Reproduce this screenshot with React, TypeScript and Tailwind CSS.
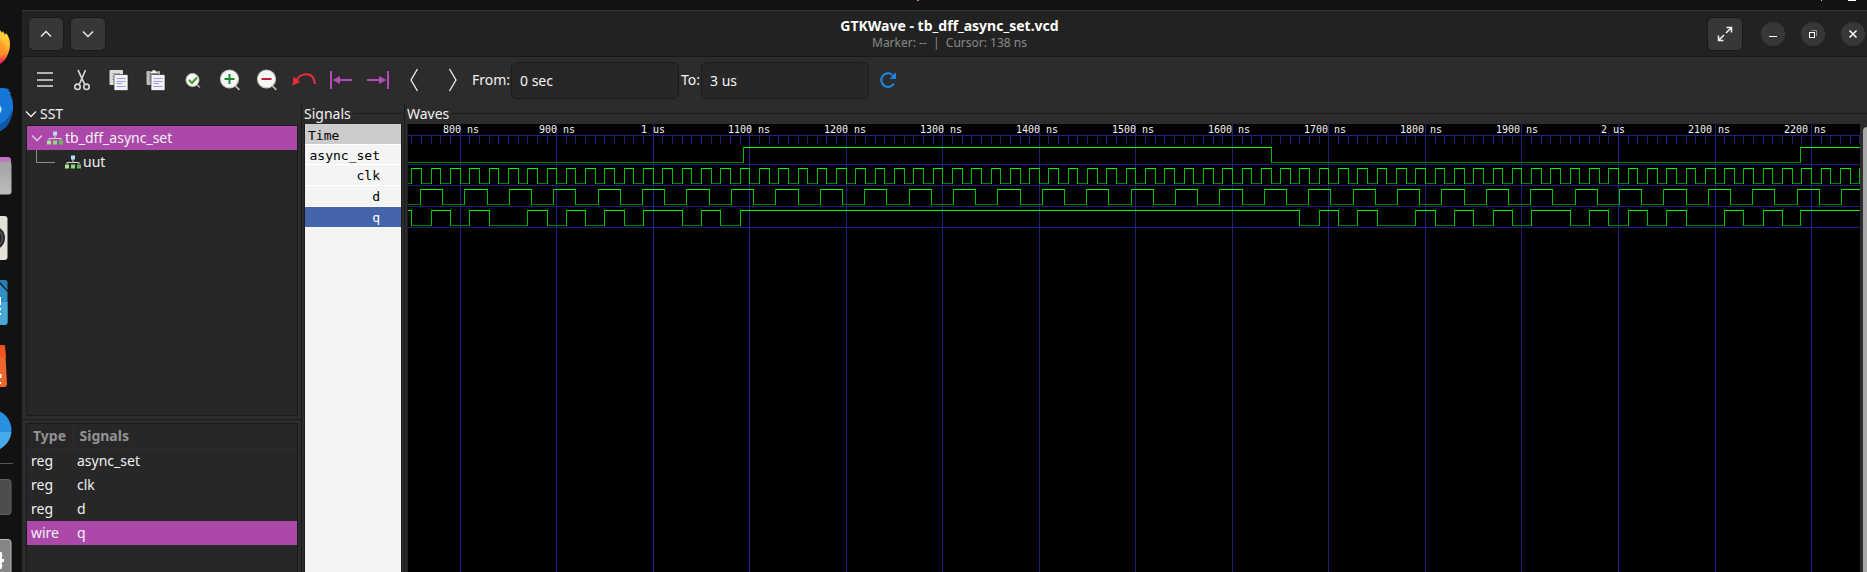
import type { ReactNode } from "react";

/* ---------- Wave data ---------- */

const X0 = 52.15;
const T0 = 800;
const PX_PER_NS = 0.9653;
const START = 740;
const END = 2400;

const toX = (t: number) => Math.floor(X0 + (t - T0) * PX_PER_NS) + 0.5;

type Signal = { name: string; top: number; initial: 0 | 1; edges: number[] };

const range = (from: number, to: number, step: number) => {
  const out: number[] = [];
  for (let t = from; t <= to; t += step) out.push(t);
  return out;
};

const signals: Signal[] = [
  { name: "async_set", top: 23, initial: 0, edges: [1094, 1640, 2189] },
  { name: "clk", top: 44, initial: 0, edges: range(750, END, 10) },
  { name: "d", top: 65, initial: 0, edges: range(759, END, 23) },
  {
    name: "q",
    top: 86,
    initial: 1,
    edges: [
      750, 770, 790, 810, 830, 870, 890, 910, 930, 950, 970, 990, 1030, 1050,
      1070, 1090, 1670, 1690, 1710, 1730, 1750, 1790, 1810, 1830, 1850, 1870,
      1890, 1910, 1950, 1970, 1990, 2010, 2030, 2050, 2070, 2110, 2130, 2150,
      2170, 2189,
    ],
  },
];

function trace({ top, initial, edges }: Signal) {
  let high = "";
  let low = "";
  let vertical = "";
  let level = initial as number;
  let x = Math.min(0, toX(START));
  const yHigh = top + 0.5;
  const yLow = top + 15.5;
  for (const t of [...edges, END]) {
    const nx = toX(t);
    if (level) high += `M${x} ${yHigh}H${nx}`;
    else low += `M${x} ${yLow}H${nx}`;
    if (t !== END) vertical += `M${nx} ${top}V${top + 16}`;
    level = 1 - level;
    x = nx;
  }
  return { high, low, vertical };
}

const majors = range(800, 2200, 100);
const ticks = range(750, END, 10);
const labelFor = (t: number) => (t % 1000 === 0 ? `${t / 1000} us` : `${t} ns`);

function WaveCanvas() {
  const ticksPath = ticks.map((t) => `M${toX(t)} 11V20`).join("");
  return (
    <svg
      role="img"
      aria-label="Waveforms"
      className="block h-full w-full"
      shapeRendering="crispEdges"
      fill="none"
    >
      <g stroke="#20207a">
        {majors.map((t) => (
          <line key={t} x1={toX(t)} x2={toX(t)} y1="0" y2="100%" />
        ))}
        {[11, 40, 61, 82, 103].map((y) => (
          <line key={y} x1="0" x2="100%" y1={y + 0.5} y2={y + 0.5} />
        ))}
        <path d={ticksPath} />
      </g>
      <g fill="#f5f5f5" textAnchor="middle" className="font-['DejaVu_Sans_Mono',monospace] text-[10px]">
        {majors.map((t, i) => (
          <text key={t} x={53 + i * 96} y="9">
            {labelFor(t)}
          </text>
        ))}
      </g>
      {signals.map((s) => {
        const p = trace(s);
        return (
          <g key={s.name}>
            <path d={p.low} stroke="#008000" />
            <path d={p.vertical} stroke="#00c000" />
            <path d={p.high} stroke="#00ff00" />
          </g>
        );
      })}
    </svg>
  );
}

/* ---------- Icons ---------- */

const Chevron = ({ className, d }: { className?: string; d: string }) => (
  <svg width="12" height="12" viewBox="0 0 12 12" fill="none" stroke="currentColor" strokeWidth="1.3" className={className}>
    <path d={d} />
  </svg>
);

const CHEVRON_DOWN = "M1 3.5 6 8.5 11 3.5";
const CHEVRON_UP = "M1 8.5 6 3.5 11 8.5";

const ModuleIcon = () => (
  <svg width="16" height="14" viewBox="0 0 16 14" className="shrink-0">
    <path d="M8 4v3M2 9V7.5h12V9" fill="none" stroke="#d8d8d8" />
    <rect x="6" y="0.5" width="4" height="4" fill="#b9dcf8" />
    <rect x="0" y="9.5" width="4" height="4" fill="#a6e592" />
    <rect x="6" y="9.5" width="4" height="4" fill="#8fd67c" />
    <rect x="12" y="9.5" width="4" height="4" fill="#5fbf55" />
  </svg>
);

const Icon = ({ children }: { children: ReactNode }) => (
  <svg width="24" height="24" viewBox="0 0 24 24" fill="none">
    {children}
  </svg>
);

const Page = () => (
  <>
    <rect x="7" y="6.5" width="14" height="16" rx="1" fill="#f3f3f1" stroke="#1d1d1d" strokeWidth="0.6" />
    <path d="M9.5 10.5h9M9.5 13.5h9M9.5 15.500h5.500M9.5 18.500h9" stroke="#9c9cf0" strokeWidth="1" />
  </>
);

const Lens = ({ children }: { children: ReactNode }) => (
  <>
    <path d="M17 18l5 4.500" stroke="#1b1b1b" strokeWidth="3.500" />
    <path d="M17 17.500l4.500 4.500" stroke="#b7b4a8" strokeWidth="1.800" />
    <circle cx="11.500" cy="11" r="9" fill="#f8f8f6" stroke="#c9c7bd" strokeWidth="1.200" />
    {children}
  </>
);

const tools: { label: string; icon: ReactNode }[] = [
  {
    label: "Menu",
    icon: <path d="M4 5h16M4 12h16M4 18h16" stroke="#dedede" strokeWidth="1.500" />,
  },
  {
    label: "Cut",
    icon: (
      <>
        <path d="M8 2 14.500 16M15.500 2 9.500 16" stroke="#1c1c1c" strokeWidth="3.200" />
        <path d="M8 2 14.500 16M15.500 2 9.500 16" stroke="#cfcfcb" strokeWidth="1.800" />
        <circle cx="7.500" cy="18.800" r="2.700" stroke="#d9d9d6" strokeWidth="1.600" />
        <circle cx="16.500" cy="18.800" r="2.700" stroke="#d9d9d6" strokeWidth="1.600" />
      </>
    ),
  },
  {
    label: "Copy",
    icon: (
      <>
        <rect x="2.5" y="2" width="13.5" height="15" rx="1" fill="#dcdcda" />
        <path d="M5 5.500h8M5 8.500h8M5 11.500h8" stroke="#a9a9a9" />
        <Page />
      </>
    ),
  },
  {
    label: "Paste",
    icon: (
      <>
        <rect x="2.5" y="3" width="13.5" height="14" rx="1" fill="#bdbdbb" />
        <rect x="5" y="5" width="9" height="9" fill="#a2a2a0" />
        <path d="M6 5.500V3.500h2L8.500 2h3L12 3.500h2v2z" fill="#f0f0ee" stroke="#444" strokeWidth="0.500" />
        <Page />
      </>
    ),
  },
  {
    label: "Zoom fit",
    icon: (
      <>
        <path d="M15 16l4 3.500" stroke="#b7b4a8" strokeWidth="1.600" />
        <circle cx="11.500" cy="12" r="6.500" fill="#f8f8f6" stroke="#c9c7bd" />
        <path d="M8 12l3 3 5-5.500" stroke="#3f9e2f" strokeWidth="2.200" />
      </>
    ),
  },
  {
    label: "Zoom in",
    icon: (
      <Lens>
        <path d="M6.500 11h10M11.500 6v10" stroke="#1d8a2c" strokeWidth="2" />
      </Lens>
    ),
  },
  {
    label: "Zoom out",
    icon: (
      <Lens>
        <path d="M6.500 11h10" stroke="#c01c35" strokeWidth="2" />
      </Lens>
    ),
  },
  {
    label: "Zoom undo",
    icon: (
      <>
        <path d="M4 13C8 4 22 3 23 16" stroke="#f02c3c" strokeWidth="2" />
        <path d="M0.500 17.500 1.500 8.500 8 14z" fill="#f02c3c" />
      </>
    ),
  },
  {
    label: "Previous edge",
    icon: (
      <>
        <path d="M2 3v18" stroke="#b44bb4" strokeWidth="2" />
        <path d="M9 12h14" stroke="#b44bb4" strokeWidth="2" />
        <path d="M3.500 12 11 8v8z" fill="#b44bb4" />
      </>
    ),
  },
  {
    label: "Next edge",
    icon: (
      <>
        <path d="M22 3v18" stroke="#b44bb4" strokeWidth="2" />
        <path d="M1 12h14" stroke="#b44bb4" strokeWidth="2" />
        <path d="M20.500 12 13 8v8z" fill="#b44bb4" />
      </>
    ),
  },
  {
    label: "Page left",
    icon: <path d="M14.500 1 8 12l6.500 11" stroke="#f0f0f0" strokeWidth="1.300" />,
  },
  {
    label: "Page right",
    icon: <path d="M9.500 1 16 12 9.500 23" stroke="#f0f0f0" strokeWidth="1.300" />,
  },
];

function ToolButton({ label, children }: { label: string; children: ReactNode }) {
  return (
    <button type="button" aria-label={label} className="flex h-9 w-[37px] shrink-0 items-center justify-center">
      <Icon>{children}</Icon>
    </button>
  );
}

/* ---------- Dock ---------- */

const dockApps: { label: string; art: ReactNode }[] = [
  {
    label: "Firefox",
    art: (
      <>
        <defs>
          <linearGradient id="fx" x1="0.200" y1="0" x2="0" y2="1">
            <stop offset="0" stopColor="#ffdd3c" />
            <stop offset="0.400" stopColor="#ffb32e" />
            <stop offset="0.720" stopColor="#ff6a35" />
            <stop offset="1" stopColor="#f0127a" />
          </linearGradient>
        </defs>
        <path d="M0 15l2 3 1-2 2 4 1-2c5 6 5 14 2 21-2 5-5 8-8 10z" fill="url(#fx)" />
        <path d="M0 25c5 2 7 8 4 14l-4 4z" fill="#ff9a2a" opacity="0.700" />
      </>
    ),
  },
  {
    label: "Thunderbird",
    art: (
      <>
        <path d="M0 9c4 0 7 0 10 2l-2 0 3 3-1 1c4 7 4 16 1 24-3 7-6 11-11 13z" fill="#1777d8" />
        <path d="M0 45c6-3 10-8 12-14 0 11-5 18-12 21z" fill="#0d58a8" />
        <path d="M0 27c2 1 2 5 0 7z" fill="#bfe4ff" />
      </>
    ),
  },
  {
    label: "Files",
    art: (
      <>
        <defs>
          <linearGradient id="fl" x1="0" y1="0" x2="0" y2="1">
            <stop offset="0" stopColor="#a3a3a3" />
            <stop offset="1" stopColor="#bcbcbc" />
          </linearGradient>
        </defs>
        <rect x="-10" y="14" width="21" height="30" rx="3" fill="#c272c6" />
        <rect x="-10" y="18.500" width="21.500" height="33" rx="3" fill="url(#fl)" />
      </>
    ),
  },
  {
    label: "Rhythmbox",
    art: (
      <>
        <rect x="-20" y="9" width="27.500" height="44" rx="3" fill="#e6e1d6" />
        <circle cx="-7" cy="31" r="12" fill="#26262b" />
        <circle cx="-7" cy="31" r="9.500" fill="none" stroke="#56565e" strokeWidth="1.500" />
      </>
    ),
  },
  {
    label: "LibreOffice Writer",
    art: (
      <>
        <path d="M0 9h6l1.500 1.500v9L0 11z" fill="#2a7fb0" />
        <path d="M0 13l7.500 8V51a3 3 0 0 1-3 3H0z" fill="#2f8fc0" />
        <path d="M0 31h7.500V51a3 3 0 0 1-3 3H0z" fill="#4aa8d6" />
        <path d="M0 26h1v8H0zM0 37h1v2H0zM0 42h1v2H0z" fill="#fff" />
      </>
    ),
  },
  {
    label: "App Center",
    art: (
      <>
        <path d="M0 10h3a2 2 0 0 1 2 2l2 37a3 3 0 0 1-3 3H0z" fill="#f0672e" />
        <path d="M0 10h3a2 2 0 0 1 2 2l1 11H0z" fill="#f0561f" />
        <path d="M0 39h1.500v4H0zM0 47h1v2H0z" fill="#fff" />
      </>
    ),
  },
  {
    label: "Help",
    art: (
      <>
        <circle cx="-9" cy="31" r="20.500" fill="#2790e0" />
        <path d="M-20 33H11.400c-1 8-5 13-11.400 17z" fill="#46a9ea" />
      </>
    ),
  },
];

function DockItem({ label, children }: { label: string; children: ReactNode }) {
  return (
    <button type="button" aria-label={label} className="block h-16 w-full shrink-0">
      <svg width="22" height="64" viewBox="0 0 22 64" className="block">
        {children}
      </svg>
    </button>
  );
}

function Dock() {
  return (
    <nav aria-label="Dock" className="flex w-[22px] shrink-0 flex-col overflow-hidden bg-[#121212] pt-[5px]">
      {dockApps.map((a) => (
        <DockItem key={a.label} label={a.label}>
          {a.art}
        </DockItem>
      ))}
      <div className="mb-px h-px w-[13px] shrink-0 bg-[#555]" />
      <DockItem label="Disk">
        <rect x="-10" y="14.500" width="21" height="35" rx="3" fill="#4d4d4d" stroke="#616161" />
      </DockItem>
      <DockItem label="Settings">
        <rect x="-10" y="10.500" width="21" height="48" rx="3" fill="#858585" stroke="#b8b8b8" />
        <path
          d="M0 23h1.500l1 3.500-1 2 1 1.500 1.500 0v3h-1.500l-1 1.500 1 2-1 3.500H0z"
          fill="#fff"
        />
      </DockItem>
    </nav>
  );
}

/* ---------- Window parts ---------- */

const squareButton =
  "flex h-[34px] w-[36px] items-center justify-center rounded-md border border-[#191919] bg-[#373737] text-[#f2f2f2]";
const roundButton = "flex size-6 items-center justify-center rounded-full bg-[#373737]";

function TitleBar() {
  return (
    <header className="flex h-[47px] shrink-0 items-center border-t border-b border-t-[#383838] border-b-[#171717] bg-[#222]">
      <div className="flex flex-1 gap-[6px] pl-[6px]">
        <button type="button" aria-label="Up" className={squareButton}>
          <Chevron d={CHEVRON_UP} />
        </button>
        <button type="button" aria-label="Down" className={squareButton}>
          <Chevron d={CHEVRON_DOWN} />
        </button>
      </div>
      <div className="pl-[6px] text-center">
        <h1 className="text-[14px] leading-[18px] font-bold text-white">GTKWave - tb_dff_async_set.vcd</h1>
        <p className="text-[12px] leading-4 whitespace-pre text-[#8a8a8a]">{"Marker: --  |  Cursor: 138 ns"}</p>
      </div>
      <div className="flex flex-1 items-center justify-end gap-[18px] pr-[2px]">
        <button type="button" aria-label="Full screen" className={squareButton}>
          <svg width="16" height="16" viewBox="0 0 16 16" fill="none" stroke="currentColor" strokeWidth="1.500">
            <path d="M9.500 1.500h5v5M14.500 1.500 9 7M6.500 14.500h-5v-5M1.500 14.500 7 9" />
          </svg>
        </button>
        <div className="flex gap-4">
          <button type="button" aria-label="Minimize" className={roundButton}>
            <svg width="16" height="16" viewBox="0 0 16 16" stroke="#fff">
              <path d="M4 10.500h8" />
            </svg>
          </button>
          <button type="button" aria-label="Restore" className={roundButton}>
            <svg width="16" height="16" viewBox="0 0 16 16" fill="none">
              <path d="M6 4.500h5.500V10" stroke="#8d8d8d" />
              <rect x="4.500" y="6.500" width="5" height="5" stroke="#fff" />
            </svg>
          </button>
          <button type="button" aria-label="Close" className={roundButton}>
            <svg width="16" height="16" viewBox="0 0 16 16" stroke="#fff" strokeWidth="1.500">
              <path d="M4.500 4.500l7 7M11.500 4.500l-7 7" />
            </svg>
          </button>
        </div>
      </div>
    </header>
  );
}

const timeInput =
  "h-[37px] w-[168px] rounded-[6px] border border-[#1b1b1b] bg-[#272727] px-2 text-[14px] text-[#f5f5f5] outline-none";

function Toolbar() {
  return (
    <div role="toolbar" aria-label="Main" className="flex h-[46px] shrink-0 items-center pl-1">
      {tools.map((t) => (
        <ToolButton key={t.label} label={t.label}>
          {t.icon}
        </ToolButton>
      ))}
      <label htmlFor="from" className="w-[41px] shrink-0 pl-[2px]">
        From:
      </label>
      <input id="from" defaultValue="0 sec" className={timeInput} />
      <label htmlFor="to" className="w-[22px] shrink-0 pl-[2px]">
        To:
      </label>
      <input id="to" defaultValue="3 us" className={timeInput} />
      <ToolButton label="Reload">
        <path d="M18 15.500A6.800 6.800 0 1 1 16 6.500" stroke="#1f83d8" strokeWidth="2.200" />
        <path d="M20 4.500v6.500h-6.500l2-2 0.500-2z" fill="#1f83d8" />
      </ToolButton>
    </div>
  );
}

const rows = [
  ["reg", "async_set"],
  ["reg", "clk"],
  ["reg", "d"],
  ["wire", "q"],
];

function Sidebar() {
  return (
    <aside className="flex w-[279px] shrink-0 flex-col">
      <button type="button" className="flex h-[22px] shrink-0 items-center gap-[3px] pl-[3px]">
        <Chevron d={CHEVRON_DOWN} />
        <span>SST</span>
      </button>
      <ul className="mr-[3px] ml-1 h-[291px] shrink-0 border border-[#1b1b1b] bg-[#272727]">
        <li className="flex h-6 items-center bg-[#ad48ab] pl-1">
          <Chevron d={CHEVRON_DOWN} className="mr-1 opacity-80" />
          <ModuleIcon />
          <span className="pl-[2px]">tb_dff_async_set</span>
        </li>
        <li className="flex h-6 items-center">
          <svg width="28" height="24" viewBox="0 0 28 24" fill="none" stroke="#8c8c8c" className="mr-[10px]">
            <path d="M9.500 0v12.500H28" />
          </svg>
          <ModuleIcon />
          <span className="pl-[2px]">uut</span>
        </li>
      </ul>
      <div className="my-[3px] h-px shrink-0 bg-[#1b1b1b]" />
      <div className="mr-[3px] ml-1 min-h-0 flex-1 border border-b-0 border-[#1b1b1b] bg-[#272727]">
        <table className="w-full table-fixed border-collapse text-left">
          <thead>
            <tr className="h-[25px] border-b border-[#2e2e2e] text-[#929292]">
              <th className="w-[46px] border-r border-[#2e2e2e] p-0 pl-[6px] font-bold">Type</th>
              <th className="p-0 pl-[6px] font-bold">Signals</th>
            </tr>
          </thead>
          <tbody>
            {rows.map(([type, name]) => (
              <tr key={name} className={name === "q" ? "h-6 bg-[#ad48ab]" : "h-6"}>
                <td className="p-0 pl-1">{type}</td>
                <td className="p-0 pl-1">{name}</td>
              </tr>
            ))}
          </tbody>
        </table>
      </div>
    </aside>
  );
}

function FrameTitle({ children }: { children: ReactNode }) {
  return (
    <div className="flex h-[21px] shrink-0 items-center">
      <h2>{children}</h2>
      <div className="ml-[2px] h-px flex-1 bg-[#1b1b1b]" />
    </div>
  );
}

const PaneHandle = () => <div className="mr-[2px] w-px shrink-0 bg-[#191919]" />;

export default function App() {
  return (
    <div className="flex h-screen flex-col overflow-hidden bg-[#131313] font-['Noto_Sans',sans-serif] text-[14px] leading-5 text-[#f2f2f2]">
      <div className="flex h-[10px] shrink-0 items-start bg-[#131313]">
        <div className="flex-1" />
        <div className="mr-5 h-px w-[2px] bg-[#d98a4a]" />
        <div className="flex flex-1 justify-end gap-[26px] pr-[11px]">
          <div className="h-px w-px bg-[#bbb]" />
          <div className="h-px w-2 bg-white" />
        </div>
      </div>
      <div className="flex min-h-0 flex-1">
        <Dock />
        <div className="flex min-w-0 flex-1 flex-col bg-[#2c2c2c]">
          <TitleBar />
          <Toolbar />
          <main className="flex min-h-0 flex-1">
            <Sidebar />
            <PaneHandle />
            <section className="mr-[2px] flex w-[98px] shrink-0 flex-col">
              <FrameTitle>Signals</FrameTitle>
              <ul className="flex-1 border-x border-[#1b1b1b] bg-[#f4f4f4] font-['DejaVu_Sans_Mono',monospace] text-[13px] leading-[22px] text-black">
                <li className="h-[21px] border-b border-white bg-[#ccc] pl-[3px] leading-6">Time</li>
                <li className="h-5 border-b border-white pr-[21px] text-right">async_set</li>
                <li className="h-[21px] border-b border-white pr-[21px] text-right">clk</li>
                <li className="h-[21px] border-b border-white pr-[21px] text-right">d</li>
                <li className="h-5 bg-[#4464ac] pr-[21px] text-right text-white">q</li>
              </ul>
            </section>
            <PaneHandle />
            <section className="flex min-w-0 flex-1 flex-col">
              <FrameTitle>Waves</FrameTitle>
              <div className="flex min-h-0 flex-1">
                <div className="min-w-0 flex-1 overflow-hidden border-l border-[#1b1b1b] bg-black">
                  <WaveCanvas />
                </div>
                <div className="ml-[3px] w-1 pt-[3px]">
                  <div className="h-full rounded-tl bg-[#a8a6a6]" />
                </div>
              </div>
            </section>
          </main>
        </div>
      </div>
    </div>
  );
}
